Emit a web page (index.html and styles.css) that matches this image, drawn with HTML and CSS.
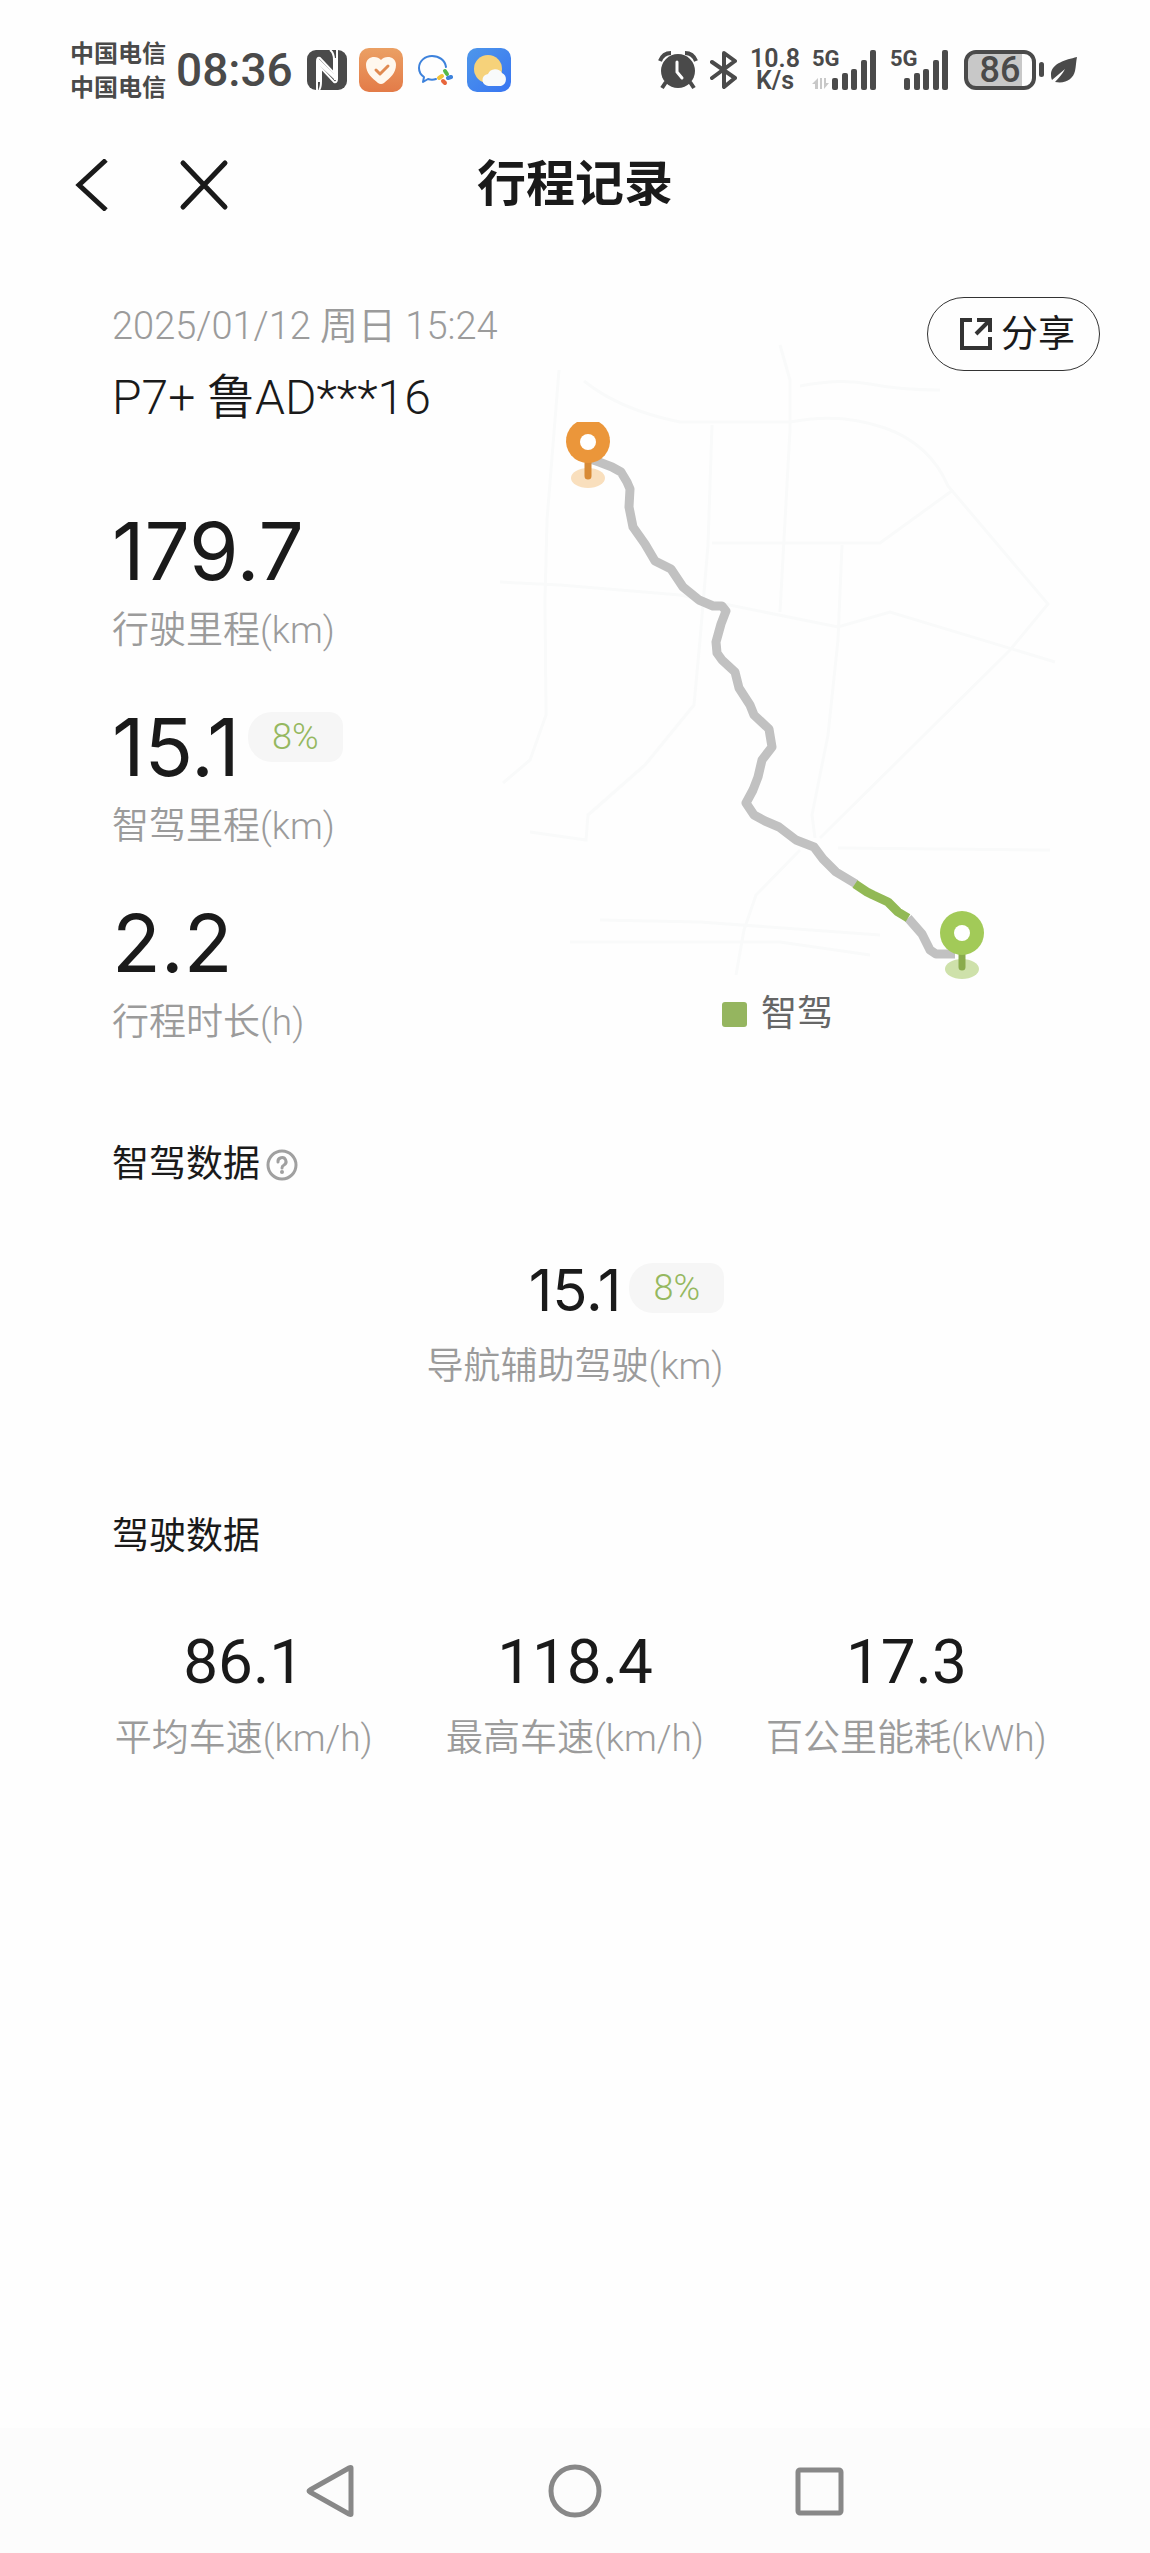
FILE: index.html
```html
<!DOCTYPE html>
<html lang="zh-CN">
<head>
<meta charset="utf-8">
<meta name="viewport" content="width=device-width, initial-scale=1">
<title>行程记录</title>
<link rel="stylesheet" href="styles.css">
</head>
<body>
<header class="status-bar">
  <div class="status-group status-left">
    <div class="carriers"><span>中国电信</span><span>中国电信</span></div>
    <time class="clock">08:36</time>
    <svg class="app-icon nfc" viewBox="0 0 40 40" width="40" height="40" aria-hidden="true">
      <rect width="40" height="40" rx="9" fill="#4a4a4a"/>
      <path d="M10 40V11q0-4 3-3l14 15V10c0-5-1-8-4-10M30 0v29q0 4-3 3L14 18v13c0 5 0 7-2 9" fill="none" stroke="#fefefe" stroke-width="2"/>
      <path d="M11 8l16 16v5L13 16v16h-3V10zM27 8h3v22h-3z" fill="#fefefe"/>
    </svg>
    <svg class="app-icon" viewBox="0 0 44 44" width="44" height="44" aria-hidden="true">
      <defs><linearGradient id="heart-bg" x2="0" y2="1"><stop stop-color="#eba064"/><stop offset="1" stop-color="#e37b48"/></linearGradient></defs>
      <rect width="44" height="44" rx="10" fill="url(#heart-bg)"/>
      <path d="M22 12c4-5 15-4 15 5 0 8-6 13-12 18q-3 2-6 0C13 30 7 25 7 17c0-9 11-10 15-5z" fill="#fff8ee"/>
      <path d="M17 22l4 4 8-8" fill="none" stroke="#e08a50" stroke-width="3" stroke-linecap="round" stroke-linejoin="round"/>
    </svg>
    <svg class="app-icon chat" viewBox="0 0 36 32" width="36" height="32" aria-hidden="true">
      <path d="M29 13C28 6 22 2 15 2 8 2 2 7 2 14c0 4 2 7 5 9l-1 5 5-3c3 1 5 1 8 0" fill="none" stroke="#3d82dc" stroke-width="2" stroke-linecap="round" stroke-linejoin="round"/>
      <path d="M28 17l2 3" stroke="#55b948" stroke-width="4" stroke-linecap="round"/>
      <path d="M22 24l3-2" stroke="#f2c23a" stroke-width="4" stroke-linecap="round"/>
      <path d="M31 24l3-1" stroke="#3d82dc" stroke-width="4" stroke-linecap="round"/>
      <path d="M26 27l2 2" stroke="#e8663c" stroke-width="4" stroke-linecap="round"/>
    </svg>
    <svg class="app-icon" viewBox="0 0 44 44" width="44" height="44" aria-hidden="true">
      <defs><linearGradient id="sky" x2="1" y2="1"><stop stop-color="#4e97ea"/><stop offset="1" stop-color="#3875f2"/></linearGradient></defs>
      <rect width="44" height="44" rx="10" fill="url(#sky)"/>
      <circle cx="21" cy="21" r="14" fill="#f6d27a"/>
      <path d="M22 38a6 6 0 0 1-1-12 8 8 0 0 1 14-1 7 7 0 0 1-1 13z" fill="#f8fafb"/>
    </svg>
  </div>
  <div class="status-group status-right">
    <svg class="alarm" viewBox="0 0 40 40" width="40" height="40" aria-hidden="true">
      <path d="M8 32l-4 6M32 32l4 6" stroke="#4a4a4a" stroke-width="4"/>
      <path d="M2 11Q5 3 13 3M38 11Q35 3 27 3" fill="none" stroke="#4a4a4a" stroke-width="4"/>
      <circle cx="20" cy="21" r="17" fill="#4a4a4a"/>
      <path d="M19 12v10l5 6" fill="none" stroke="#fefefe" stroke-width="3" stroke-linecap="round"/>
    </svg>
    <svg class="bluetooth" viewBox="0 0 28 40" width="28" height="40" aria-hidden="true">
      <path d="M2 12l23 16-11 9V3l11 8L2 28" fill="none" stroke="#4a4a4a" stroke-width="4" stroke-linejoin="round" stroke-linecap="round"/>
    </svg>
    <div class="net-speed"><span>10.8</span><span>K/s</span></div>
    <div class="signal">
      <span class="signal-type">5G</span>
      <svg viewBox="0 0 66 40" width="66" height="40" aria-hidden="true">
        <path d="M0 34l6-6v11h-3v-5zM8 28v11h2V28zM12 28v11l5-6h-3v-5z" fill="#c8c8c8"/>
        <g fill="#4a4a4a"><rect x="20" y="28" width="6" height="12" rx="2"/><rect x="30" y="23" width="6" height="17" rx="2"/><rect x="39" y="19" width="6" height="21" rx="2"/><rect x="49" y="10" width="6" height="30" rx="2"/><rect x="58" y="0" width="6" height="40" rx="2"/></g>
      </svg>
    </div>
    <div class="signal second">
      <span class="signal-type">5G</span>
      <svg viewBox="0 0 60 40" width="60" height="40" aria-hidden="true">
        <g fill="#4a4a4a"><rect x="14" y="28" width="6" height="12" rx="2"/><rect x="24" y="23" width="6" height="17" rx="2"/><rect x="33" y="19" width="6" height="21" rx="2"/><rect x="43" y="10" width="6" height="30" rx="2"/><rect x="52" y="0" width="6" height="40" rx="2"/></g>
      </svg>
    </div>
    <div class="battery">86</div>
    <svg class="leaf" viewBox="0 0 28 28" width="28" height="28" aria-hidden="true">
      <path d="M27 1C15 4 3 7 1 17c0 3 0 5 1 7l13-11C13 17 9 22 5 26c11 2 18-3 20-11 1-5 1-9 2-14z" fill="#4a4a4a"/>
    </svg>
  </div>
</header>

<nav class="title-bar">
  <button class="icon-button" type="button" aria-label="返回">
    <svg viewBox="0 0 36 52" width="36" height="52"><path d="M32 1L5 26l27 25" fill="none" stroke="#1a1a1a" stroke-width="5"/></svg>
  </button>
  <button class="icon-button" type="button" aria-label="关闭">
    <svg viewBox="0 0 52 52" width="52" height="52"><path d="M5 4l42 44M47 4L5 48" fill="none" stroke="#1a1a1a" stroke-width="5" stroke-linecap="round"/></svg>
  </button>
  <h1 class="page-title">行程记录</h1>
</nav>

<main class="content">
  <section class="trip">
    <div class="trip-info">
      <p class="trip-date">2025/01/12 周日 15:24</p>
      <h2 class="trip-car">P7+ 鲁AD***16</h2>
      <dl class="trip-stats">
        <div class="stat"><dd class="stat-value">179.7</dd><dt class="label">行驶里程(km)</dt></div>
        <div class="stat"><dd class="stat-value"><span class="with-badge">15.1<span class="badge">8%</span></span></dd><dt class="label">智驾里程(km)</dt></div>
        <div class="stat"><dd class="stat-value">2.2</dd><dt class="label">行程时长(h)</dt></div>
      </dl>
    </div>
    <div class="trip-map">
      <button class="share" type="button">
        <svg viewBox="0 0 34 34" width="34" height="34" aria-hidden="true"><path d="M13 3H3v28h28V20M18 3h13v12M31 3L17 17" fill="none" stroke="#333" stroke-width="4"/></svg>
        <span class="share-text">分享</span>
      </button>
      <svg class="map" viewBox="500 371 600 617" role="img" aria-label="行程路线">
        <g fill="none" stroke="#f9fafa" stroke-width="3">
          <path d="M559 370L547 520 545 600 546 715 530 760 503 783"/>
          <path d="M584 381Q620 410 680 422L790 422Q840 412 885 428T948 486L1048 604 1010 650 820 838"/>
          <path d="M780 345L790 380 790 430 780 612M800 386Q840 378 870 384T940 390"/>
          <path d="M712 425L708 545 700 640 694 705 645 765 588 815 586 840 530 832"/>
          <path d="M712 543H880L953 490M842 545L838 640 828 735 812 815 815 838"/>
          <path d="M500 582L560 585 680 595 838 627 890 612 1055 662M838 848L1050 850M800 850L756 895 744 930 736 975M600 920L700 922 880 935M570 942L780 942 870 955"/>
        </g>
        <g fill="none" stroke="#c1c1c1" stroke-width="9" stroke-linejoin="round">
          <path d="M590 459L599 462 612 467 621 472 627 482 630 489 629 507 633 527 645 544 655 561 671 569 683 587 699 600 713 606 722 606 726 611 721 624 716 642 717 653 722 660 735 672 739 688 750 705 754 715 769 729 772 747 762 760 758 777 753 790 746 803 754 815 765 821 779 827 796 840 814 847 823 859 836 872 856 884"/>
          <path d="M908 918L922 934 930 950 936 954 955 954"/>
        </g>
        <path d="M855 884L867 892 873 895 888 902 898 912 908 918" fill="none" stroke="#92b955" stroke-width="9" stroke-linejoin="round"/>
        <g>
          <ellipse cx="588" cy="478" rx="17" ry="10" fill="#f9dfbd"/>
          <path d="M588 460v16" stroke="#d88a35" stroke-width="7" stroke-linecap="round"/>
          <path d="M577 422h22a22 22 0 1 1-22 0z" fill="#eb963a"/>
          <circle cx="588" cy="442" r="8" fill="#fff"/>
        </g>
        <g>
          <ellipse cx="962" cy="969" rx="17" ry="10" fill="#cee1aa"/>
          <path d="M962 950v17" stroke="#8aac4c" stroke-width="7" stroke-linecap="round"/>
          <circle cx="962" cy="933" r="22" fill="#a2ca58"/>
          <circle cx="962" cy="933" r="8" fill="#fff"/>
        </g>
      </svg>
      <p class="legend"><span class="legend-swatch"></span>智驾</p>
    </div>
  </section>

  <section class="panel">
    <h2 class="panel-title">智驾数据
      <button class="help" type="button" aria-label="说明">
        <svg viewBox="0 0 32 32" width="32" height="32"><circle cx="16" cy="16" r="14" fill="none" stroke="#a0a0a0" stroke-width="3"/><path d="M12 13a4 4 0 1 1 6 3q-2 1-2 3" fill="none" stroke="#a0a0a0" stroke-width="3" stroke-linecap="round"/><circle cx="16" cy="23" r="2" fill="#a0a0a0"/></svg>
      </button>
    </h2>
    <dl class="metrics">
      <div class="metric"><dd class="metric-value assist"><span class="with-badge">15.1<span class="badge">8%</span></span></dd><dt class="label">导航辅助驾驶(km)</dt></div>
    </dl>
  </section>

  <section class="panel">
    <h2 class="panel-title">驾驶数据</h2>
    <dl class="metrics">
      <div class="metric"><dd class="metric-value">86.1</dd><dt class="label">平均车速(km/h)</dt></div>
      <div class="metric"><dd class="metric-value">118.4</dd><dt class="label">最高车速(km/h)</dt></div>
      <div class="metric"><dd class="metric-value">17.3</dd><dt class="label">百公里能耗(kWh)</dt></div>
    </dl>
  </section>
</main>

<footer class="system-nav">
  <button class="icon-button" type="button" aria-label="后退"><svg viewBox="0 0 54 54" width="54" height="54"><path d="M47 4v46q0 1-2 0L6 28q-2-1 0-2L45 4q2-1 2 0z" fill="none" stroke="#888" stroke-width="5"/></svg></button>
  <button class="icon-button" type="button" aria-label="主页"><svg viewBox="0 0 54 54" width="54" height="54"><circle cx="27" cy="27" r="24" fill="none" stroke="#888" stroke-width="5"/></svg></button>
  <button class="icon-button" type="button" aria-label="最近任务"><svg viewBox="0 0 54 54" width="54" height="54"><rect x="6" y="6" width="43" height="43" rx="2" fill="none" stroke="#888" stroke-width="5"/></svg></button>
</footer>
</body>
</html>
```
FILE: styles.css
```css
* {
  box-sizing: border-box;
  margin: 0;
  padding: 0;
}

body {
  display: flex;
  flex-direction: column;
  min-height: 100vh;
  background: #fefefe;
  color: #1a1a1a;
  font-family: Roboto, "Noto Sans CJK SC", sans-serif;
}

button {
  border: 0;
  background: none;
  color: inherit;
  font: inherit;
}

svg {
  display: block;
  flex: none;
}

/* Status bar */
.status-bar {
  display: flex;
  justify-content: space-between;
  align-items: center;
  height: 140px;
  padding: 0 72px 0 70px;
  color: #4a4a4a;
}

.status-group {
  display: flex;
  align-items: center;
}

.carriers {
  display: flex;
  flex-direction: column;
  padding-top: 2px;
  font-size: 24px;
  font-weight: 600;
  line-height: 34px;
}

.clock {
  margin: 0 14px 0 10px;
  font-size: 46px;
  font-weight: 500;
}

.app-icon {
  margin-right: 12px;
}

.app-icon.chat {
  margin: 0 14px 0 2px;
}

.bluetooth {
  margin: 0 12px;
}

.net-speed {
  display: flex;
  flex-direction: column;
  align-items: center;
  font-size: 25px;
  font-weight: 600;
  line-height: 22px;
}

.signal {
  position: relative;
  margin-left: 12px;
}

.signal-type {
  position: absolute;
  top: -2px;
  left: 0;
  font-size: 22px;
  font-weight: 700;
  line-height: 22px;
}

.battery {
  position: relative;
  width: 72px;
  height: 40px;
  margin: 0 14px;
  border: 4px solid #4a4a4a;
  border-radius: 12px;
  background: linear-gradient(90deg, #c8c8c8 54px, transparent 54px) no-repeat;
  font-size: 36px;
  font-weight: 500;
  line-height: 32px;
  text-align: center;
}

.battery::after {
  position: absolute;
  top: 8px;
  right: -12px;
  width: 5px;
  height: 15px;
  border-radius: 3px;
  background: #4a4a4a;
  content: "";
}

/* Title bar */
.title-bar {
  position: relative;
  display: flex;
  align-items: center;
  gap: 68px;
  height: 90px;
  padding: 0 74px;
}

.page-title {
  position: absolute;
  right: 0;
  left: 0;
  font-size: 49px;
  font-weight: 700;
  line-height: 90px;
  text-align: center;
  pointer-events: none;
}

/* Trip summary */
.content {
  flex: 1;
  padding-top: 67px;
}

.trip {
  display: grid;
  grid-template-columns: 388px 1fr;
  padding: 0 50px 0 112px;
}

.trip-date {
  color: #9b9b9b;
  font-size: 38px;
  font-weight: 350;
  line-height: 58px;
  white-space: nowrap;
}

.trip-car {
  font-size: 48px;
  font-weight: 350;
  line-height: 86px;
}

.trip-stats {
  display: flex;
  flex-direction: column;
  gap: 36px;
  margin-top: 65px;
}

.stat-value {
  font-family: Inter, sans-serif;
  font-size: 80px;
  line-height: 90px;
}

.label {
  color: #9b9b9b;
  font-size: 37px;
  font-weight: 350;
  line-height: 70px;
}

.with-badge {
  position: relative;
}

.badge {
  position: absolute;
  top: 14px;
  left: 100%;
  width: 95px;
  height: 50px;
  margin-left: 8px;
  border-radius: 24px 14px 14px 24px;
  background: #f6f6f6;
  color: #95b85f;
  font-family: Roboto, sans-serif;
  font-size: 36px;
  font-weight: 350;
  line-height: 50px;
  text-align: center;
}

.trip-map {
  display: flex;
  flex-direction: column;
}

.share {
  display: flex;
  align-items: center;
  align-self: flex-end;
  gap: 8px;
  height: 74px;
  padding: 0 24px 0 31px;
  border: 1px solid #333;
  border-radius: 37px;
  font-size: 37px;
}

.share-text {
  padding-bottom: 6px;
}

.map {
  width: 100%;
  overflow: visible;
}

.legend {
  display: flex;
  align-items: center;
  gap: 14px;
  padding-left: 222px;
  color: #666;
  font-size: 36px;
  line-height: 52px;
}

.legend-swatch {
  width: 25px;
  height: 25px;
  border-radius: 3px;
  background: #95b55f;
}

/* Data panels */
.panel {
  padding: 77px 78px 0;
}

.panel + .panel {
  padding-top: 98px;
}

.panel-title {
  display: flex;
  align-items: center;
  gap: 6px;
  padding-left: 34px;
  font-size: 37px;
  font-weight: 400;
  line-height: 60px;
}

.metrics {
  display: grid;
  grid-auto-columns: 1fr;
  grid-auto-flow: column;
  margin-top: 60px;
  text-align: center;
}

.metric-value {
  font-size: 62px;
  line-height: 70px;
}

.metric-value.assist {
  font-family: Inter, sans-serif;
  font-size: 58px;
}

.assist .badge {
  top: 8px;
}

.metric .label {
  line-height: 84px;
}

/* System navigation */
.system-nav {
  display: flex;
  justify-content: center;
  align-items: center;
  gap: 190px;
  height: 125px;
  background: #fcfcfc;
}
```
